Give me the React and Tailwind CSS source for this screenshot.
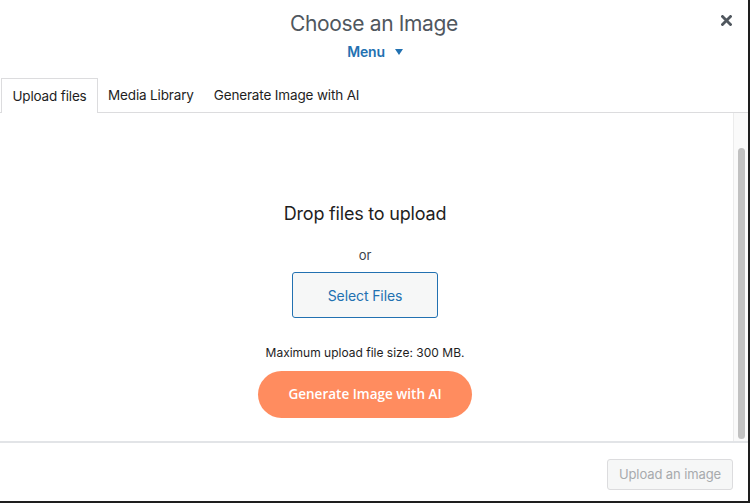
import React from 'react';

const App = () => {
  return (
    <div className="w-[750px] h-[503px] bg-white border-r-2 border-b-2 border-[#1e1e1e] flex flex-col font-['Inter',sans-serif] overflow-hidden">
      {/* Header */}
      <div className="relative h-[78px] flex flex-col items-center">
        <h1 className="mt-[10px] text-[21px] leading-[28px] text-[#50575e] font-normal tracking-[-0.35px]">
          Choose an Image
        </h1>
        <button className="mt-[4px] ml-[2px] flex items-center gap-[10px] text-[14px] leading-[20px] font-semibold text-[#2271b1] tracking-[-0.2px]">
          Menu
          <svg width="8" height="6" viewBox="0 0 8 6">
            <path d="M0 0 L8 0 L4 6 Z" fill="#2271b1" />
          </svg>
        </button>
        <button className="absolute right-[15px] top-[13px] w-[14px] h-[14px] flex items-center justify-center">
          <svg width="11" height="11" viewBox="0 0 11 11">
            <path d="M1.5 1.5 L9.5 9.5 M9.5 1.5 L1.5 9.5" stroke="#50575e" strokeWidth="2.8" strokeLinecap="square" />
          </svg>
        </button>
      </div>

      {/* Tabs */}
      <div className="flex items-end h-[35px] border-b border-[#dcdcde] pl-[1px] text-[13.5px] tracking-[-0.15px] text-[#1e1e1e]">
        <div className="h-[35px] w-[97px] flex items-center justify-center border border-b-0 border-[#dcdcde] bg-white -mb-px">
          Upload files
        </div>
        <div className="h-[34px] pl-[10px] pr-[10px] flex items-center">
          Media Library
        </div>
        <div className="h-[34px] pl-[10px] flex items-center">
          Generate Image with AI
        </div>
      </div>

      {/* Content + scrollbar */}
      <div className="flex h-[330px] border-b-2 border-[#e2e4e7]">
        <div className="flex-1 flex flex-col items-center pr-[3px]">
          <p className="mt-[89px] text-[18px] leading-[24px] text-[#1e1e1e] tracking-[-0.2px]">Drop files to upload</p>
          <p className="mt-[20px] text-[13px] leading-[18px] text-[#3c434a]">or</p>
          <button className="mt-[8px] w-[146px] h-[46px] rounded-[3px] border border-[#2271b1] bg-[#f6f7f7] text-[14px] text-[#2271b1] tracking-[-0.1px]">
            Select Files
          </button>
          <p className="mt-[27px] text-[12px] leading-[16px] text-[#1e1e1e]">
            Maximum upload file size: 300 MB.
          </p>
          <button className="mt-[10px] w-[214px] h-[47px] rounded-full bg-[#ff8c5f] text-white text-[13.5px] font-semibold font-['Open_Sans',sans-serif]">
            Generate Image with AI
          </button>
        </div>
        <div className="w-[15px] bg-[#fafafa] border-l border-[#ececec] flex justify-center pt-[35px] pb-[2px]">
          <div className="w-[7px] h-full rounded-full bg-[#c1c1c1]" />
        </div>
      </div>

      {/* Footer */}
      <div className="flex-1 flex justify-end items-start pt-[16px] pr-[15px]">
        <button className="h-[31px] w-[126px] rounded-[3px] border border-[#dcdcde] bg-[#f6f7f7] text-[13px] text-[#a7aaad] tracking-[-0.1px]">
          Upload an image
        </button>
      </div>
    </div>
  );
};

export default App;
